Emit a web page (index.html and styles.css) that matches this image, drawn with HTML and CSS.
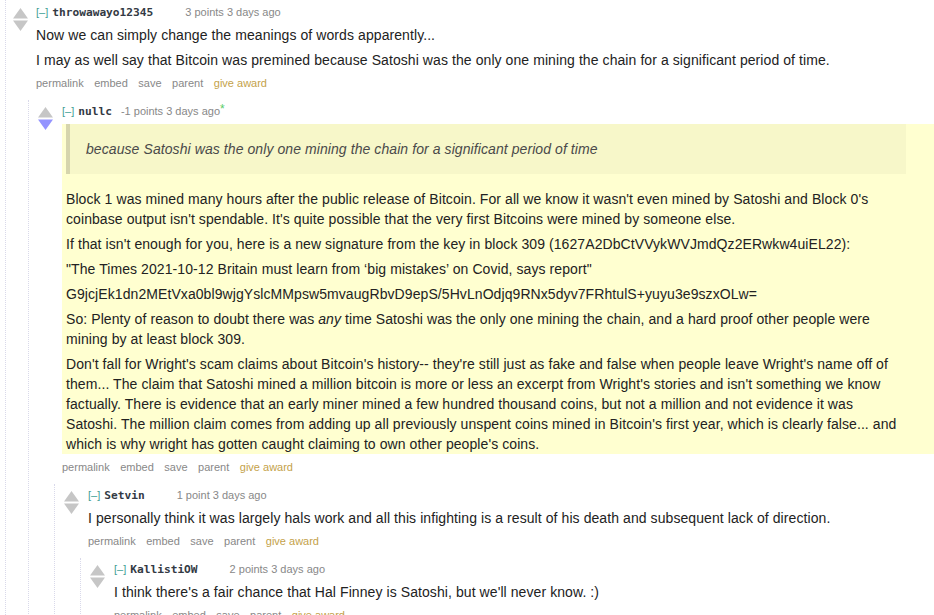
FILE: index.html
```html
<!DOCTYPE html>
<html>
<head>
<meta charset="utf-8">
<link rel="stylesheet" href="styles.css">
</head>
<body>
<div class="thread">
  <div class="comment top">
    <div class="midcol">
      <svg class="arrows" width="15" height="23" viewBox="0 0 15 23"><polygon class="up" points="7.5,0 15,10.5 0,10.5"/><polygon class="down" points="0,12.5 15,12.5 7.5,23"/></svg>
    </div>
    <div class="entry">
      <div class="tagline"><span class="expand">[–]</span><span class="author">throwawayo12345</span><span class="flair"></span><span class="score">3 points</span> <span class="time">3 days ago</span></div>
      <div class="usertext-body">
        <div class="md">
          <p>Now we can simply change the meanings of words apparently...</p>
          <p>I may as well say that Bitcoin was premined because Satoshi was the only one mining the chain for a significant period of time.</p>
        </div>
      </div>
      <ul class="buttons"><li>permalink</li><li>embed</li><li>save</li><li>parent</li><li class="award">give award</li></ul>

      <div class="child">
        <div class="comment">
          <div class="midcol">
            <svg class="arrows" width="15" height="23" viewBox="0 0 15 23"><polygon class="up" points="7.5,0 15,10.5 0,10.5"/><polygon class="down downmod" points="0,12.5 15,12.5 7.5,23"/></svg>
          </div>
          <div class="entry">
            <div class="tagline"><span class="expand">[–]</span><span class="author">nullc</span><span class="score">-1 points</span> <span class="time">3 days ago</span><span class="edited">*</span></div>
            <div class="usertext-body highlight">
              <div class="md">
                <blockquote><p>because Satoshi was the only one mining the chain for a significant period of time</p></blockquote>
                <p>Block 1 was mined many hours after the public release of Bitcoin. For all we know it wasn't even mined by Satoshi and Block 0's coinbase output isn't spendable. It's quite possible that the very first Bitcoins were mined by someone else.</p>
                <p>If that isn't enough for you, here is a new signature from the key in block 309 (1627A2DbCtVVykWVJmdQz2ERwkw4uiEL22):</p>
                <p>"The Times 2021-10-12 Britain must learn from ‘big mistakes’ on Covid, says report"</p>
                <p>G9jcjEk1dn2MEtVxa0bl9wjgYslcMMpsw5mvaugRbvD9epS/5HvLnOdjq9RNx5dyv7FRhtulS+yuyu3e9szxOLw=</p>
                <p>So: Plenty of reason to doubt there was <em>any</em> time Satoshi was the only one mining the chain, and a hard proof other people were mining by at least block 309.</p>
                <p>Don't fall for Wright's scam claims about Bitcoin's history-- they're still just as fake and false when people leave Wright's name off of them... The claim that Satoshi mined a million bitcoin is more or less an excerpt from Wright's stories and isn't something we know factually. There is evidence that an early miner mined a few hundred thousand coins, but not a million and not evidence it was Satoshi. The million claim comes from adding up all previously unspent coins mined in Bitcoin's first year, which is clearly false... and which is why wright has gotten caught claiming to own other people's coins.</p>
              </div>
            </div>
            <ul class="buttons"><li>permalink</li><li>embed</li><li>save</li><li>parent</li><li class="award">give award</li></ul>

            <div class="child">
              <div class="comment">
                <div class="midcol">
                  <svg class="arrows" width="15" height="23" viewBox="0 0 15 23"><polygon class="up" points="7.5,0 15,10.5 0,10.5"/><polygon class="down" points="0,12.5 15,12.5 7.5,23"/></svg>
                </div>
                <div class="entry">
                  <div class="tagline"><span class="expand">[–]</span><span class="author">Setvin</span><span class="flair"></span><span class="score">1 point</span> <span class="time">3 days ago</span></div>
                  <div class="usertext-body">
                    <div class="md">
                      <p>I personally think it was largely hals work and all this infighting is a result of his death and subsequent lack of direction.</p>
                    </div>
                  </div>
                  <ul class="buttons"><li>permalink</li><li>embed</li><li>save</li><li>parent</li><li class="award">give award</li></ul>

                  <div class="child">
                    <div class="comment">
                      <div class="midcol">
                        <svg class="arrows" width="15" height="23" viewBox="0 0 15 23"><polygon class="up" points="7.5,0 15,10.5 0,10.5"/><polygon class="down" points="0,12.5 15,12.5 7.5,23"/></svg>
                      </div>
                      <div class="entry">
                        <div class="tagline"><span class="expand">[–]</span><span class="author">KallistiOW</span><span class="flair"></span><span class="score">2 points</span> <span class="time">3 days ago</span></div>
                        <div class="usertext-body">
                          <div class="md">
                            <p>I think there's a fair chance that Hal Finney is Satoshi, but we'll never know. :)</p>
                          </div>
                        </div>
                        <ul class="buttons"><li>permalink</li><li>embed</li><li>save</li><li>parent</li><li class="award">give award</li></ul>
                      </div>
                    </div>
                  </div>
                </div>
              </div>
            </div>
          </div>
        </div>
      </div>
    </div>
  </div>
</div>
</body>
</html>
```
FILE: styles.css
```css
html, body {
  margin: 0;
  padding: 0;
  background: #ffffff;
  overflow: hidden;
}

body {
  font-family: "Liberation Sans", Arial, sans-serif;
  color: #222222;
  width: 934px;
  height: 615px;
}

.thread {
  margin-left: 5px;
  padding-top: 1px;
  border-left: 1px dotted #d9d9ea;
  min-height: 700px;
}

.comment {
  display: flex;
  align-items: flex-start;
}

.midcol {
  flex: 0 0 auto;
  box-sizing: border-box;
  width: 33px;
  padding-left: 9px;
  padding-top: 7px;
}

.comment.top > .midcol {
  width: 30px;
  padding-left: 6.5px;
}

.arrows {
  display: block;
}

.arrows .up,
.arrows .down {
  fill: #c6c6c6;
}

.arrows .downmod {
  fill: #9494ff;
}

.entry {
  flex: 1 1 auto;
  min-width: 0;
  padding-top: 3px;
}

.tagline {
  font-size: 11px;
  line-height: 16px;
  color: #888888;
  white-space: nowrap;
}

.expand {
  color: #3fa095;
  margin-right: 4px;
}

.author {
  font-family: "DejaVu Sans Mono", "Liberation Mono", monospace;
  font-weight: bold;
  font-size: 11.2px;
  color: #333a44;
  margin-right: 9px;
}

.flair {
  display: inline-block;
  width: 23px;
}

.edited {
  color: #55cc66;
  font-size: 12px;
  vertical-align: top;
  position: relative;
  top: -2px;
}

.usertext-body {
  margin-top: 4px;
}

.usertext-body.highlight {
  background: #ffffd0;
  padding-left: 4px;
}

.md {
  max-width: 840px;
  font-size: 14px;
  line-height: 20px;
  letter-spacing: 0.08px;
}

.md p {
  margin: 0 0 5px 0;
}

.md > :last-child {
  margin-bottom: 0;
}

.md blockquote {
  margin: 0 0 15px 0;
  padding: 15px 16px;
  background: #f7f7c9;
  border-left: 4px solid #d6d5ad;
  color: #4a4a4a;
  font-style: italic;
}

.md blockquote p {
  margin: 0;
}

.buttons {
  list-style: none;
  margin: 6px 0 0 0;
  padding: 0;
  display: flex;
  gap: 10.5px;
  font-size: 11px;
  line-height: 14px;
  color: #888888;
  white-space: nowrap;
}

.buttons .award {
  color: #c4a24a;
}

.child {
  margin-top: 10px;
  margin-left: -8px;
  border-left: 1px dotted #d9d9ea;
}
```
